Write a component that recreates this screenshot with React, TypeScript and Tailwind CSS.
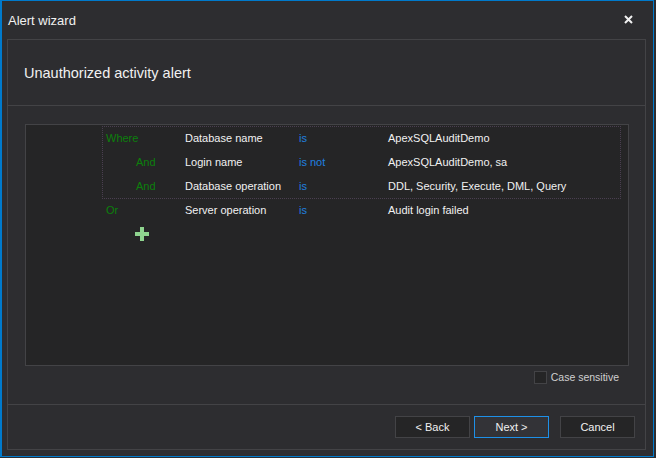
const rows = [
  { join: "Where", indent: false, field: "Database name", op: "is", value: "ApexSQLAuditDemo" },
  { join: "And", indent: true, field: "Login name", op: "is not", value: "ApexSQLAuditDemo, sa" },
  { join: "And", indent: true, field: "Database operation", op: "is", value: "DDL, Security, Execute, DML, Query" },
];

function Row({ join, indent, field, op, value }: { join: string; indent: boolean; field: string; op: string; value: string }) {
  return (
    <div className="flex h-6 items-center">
      <div className={`w-[79px] text-[#0c800c] ${indent ? "pl-[30px]" : "pl-[0px]"}`}>{join}</div>
      <div className="w-[114px] text-[#f1f1f1]">{field}</div>
      <div className="w-[89px] text-[#2080e0]">{op}</div>
      <div className="text-[#f1f1f1]">{value}</div>
    </div>
  );
}

function Button({ children, focused, className }: { children: string; focused?: boolean; className?: string }) {
  return (
    <button
      className={`flex h-[22px] items-center justify-center text-[#f1f1f1] ${focused ? "border border-[#1e90e8] bg-[#333337]" : "border border-[#434346] bg-[#252526]"} ${className ?? ""}`}
    >
      {children}
    </button>
  );
}

export default function App() {
  return (
    <div className="h-[458px] w-[656px] bg-[#2d2d30]">
      <div className="flex h-[457px] w-[654px] flex-col border border-l-2 border-[#007acc] font-['Liberation_Sans',sans-serif] text-[11px] leading-none">
        <div className="flex h-[38px] shrink-0 items-center justify-between pl-[6px] pr-[20px]">
          <span className="text-[13px] text-[#f1f1f1]">Alert wizard</span>
          <svg width="9" height="9" viewBox="0 0 9 9" className="mt-[-1px]">
            <path d="M1 1 L8 8 M8 1 L1 8" stroke="#f1f1f1" strokeWidth="2" />
          </svg>
        </div>
        <div className="mb-[6px] ml-[5px] mr-[7px] flex flex-1 flex-col border border-[#434346]">
          <div className="flex h-[66px] shrink-0 items-center border-b border-[#434346] pl-4 pt-[2px] text-[14.5px] text-[#f1f1f1]">
            Unauthorized activity alert
          </div>
          <div className="flex flex-1 flex-col pl-[17px] pr-[16px] pt-[18px]">
            <div className="h-[242px] border border-[#434346] bg-[#252526] pl-[76px] pr-[7px] pt-[1px]">
              <div className="-mb-px h-[73px] pl-[4px] outline outline-dotted -outline-offset-1 outline-[#4a3f50]">
                {rows.map((r, i) => (
                  <Row key={i} {...r} />
                ))}
              </div>
              <div className="pl-[4px]">
                <Row join="Or" indent={false} field="Server operation" op="is" value="Audit login failed" />
              </div>
              <svg width="14" height="14" viewBox="0 0 14 14" className="ml-[33px] mt-[5px]">
                <path d="M5 0 H9 V5 H14 V9 H9 V14 H5 V9 H0 V5 H5 Z" fill="#8fd48f" />
              </svg>
            </div>
            <div className="mt-[5px] flex items-center justify-end pr-[10px]">
              <span className="mr-[4px] h-[13px] w-[13px] border border-[#434346] bg-[#252526]" />
              <span className="text-[10.5px] text-[#d0d0d0]">Case sensitive</span>
            </div>
          </div>
          <div className="flex h-[45px] shrink-0 items-start justify-end border-t border-[#434346] pr-[10px] pt-[11px]">
            <Button className="w-[75px]">{"< Back"}</Button>
            <Button focused className="ml-[4px] w-[75px]">{"Next >"}</Button>
            <Button className="ml-[11px] w-[75px]">Cancel</Button>
          </div>
        </div>
      </div>
    </div>
  );
}
